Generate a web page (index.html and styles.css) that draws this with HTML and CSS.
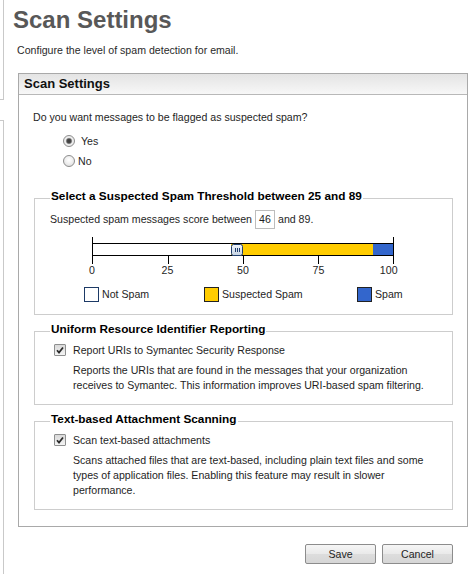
FILE: index.html
```html
<!DOCTYPE html>
<html lang="en">
<head>
<meta charset="utf-8">
<title>Scan Settings</title>
<link rel="stylesheet" href="styles.css">
</head>
<body>
<div class="page">
  <div class="rail">
    <div class="rail-top"></div>
    <div class="rail-bottom"></div>
  </div>
  <main class="main">
    <h1 class="title">Scan Settings</h1>
    <p class="subtitle">Configure the level of spam detection for email.</p>
    <section class="panel">
      <h2 class="panel-header">Scan Settings</h2>
      <div class="panel-body">
        <p class="question">Do you want messages to be flagged as suspected spam?</p>
        <div class="radio-group">
          <label class="radio-row"><span class="radio checked"></span><span>&nbsp;Yes</span></label>
          <label class="radio-row"><span class="radio"></span><span>No</span></label>
        </div>

        <fieldset class="group">
          <legend>Select a Suspected Spam Threshold between 25 and 89</legend>
          <div class="score-row">
            <span>Suspected spam messages score between</span>
            <span class="score-box">46</span>
            <span>and 89.</span>
          </div>
          <div class="slider">
            <div class="scale">
              <div class="track">
                <span class="seg seg-safe" style="width:138px"></span>
                <span class="seg seg-suspect" style="width:142px"></span>
                <span class="seg seg-spam" style="width:20px"></span>
                <span class="handle" style="left:138px">
                  <svg width="12" height="12" viewBox="0 0 12 12">
                    <defs>
                      <linearGradient id="hg" x1="0" y1="0" x2="0" y2="1">
                        <stop offset="0" stop-color="#f1f5fa"/>
                        <stop offset="1" stop-color="#c4d2e2"/>
                      </linearGradient>
                    </defs>
                    <rect x="0.5" y="0.5" width="11" height="11" rx="2" fill="url(#hg)" stroke="#1f3d6d"/>
                    <rect x="4" y="4" width="1" height="4" fill="#1f3d6d"/>
                    <rect x="6" y="4" width="1" height="4" fill="#1f3d6d"/>
                    <rect x="8" y="4" width="1" height="4" fill="#1f3d6d"/>
                  </svg>
                </span>
              </div>
              <span class="tick" style="left:25%"></span>
              <span class="tick" style="left:50%"></span>
              <span class="tick" style="left:75%"></span>
            </div>
            <div class="scale-labels">
              <span class="scale-label" style="left:0%">0</span>
              <span class="scale-label" style="left:25%">25</span>
              <span class="scale-label" style="left:50%">50</span>
              <span class="scale-label" style="left:75%">75</span>
              <span class="scale-label end" style="left:100%">100</span>
            </div>
          </div>
          <div class="key">
            <div class="key-item"><span class="swatch swatch-safe"></span><span>Not Spam</span></div>
            <div class="key-item"><span class="swatch swatch-suspect"></span><span>Suspected Spam</span></div>
            <div class="key-item"><span class="swatch swatch-spam"></span><span>Spam</span></div>
          </div>
        </fieldset>

        <fieldset class="group">
          <legend>Uniform Resource Identifier Reporting</legend>
          <label class="check-row">
            <span class="checkbox"><svg width="10" height="10" viewBox="0 0 10 10"><path d="M2 5.2 L4 7.6 L8 2.4" fill="none" stroke="#2a2a2a" stroke-width="1.7"/></svg></span>
            <span>Report URIs to Symantec Security Response</span>
          </label>
          <p class="desc">Reports the URIs that are found in the messages that your organization receives to Symantec. This information improves URI-based spam filtering.</p>
        </fieldset>

        <fieldset class="group">
          <legend>Text-based Attachment Scanning</legend>
          <label class="check-row">
            <span class="checkbox"><svg width="10" height="10" viewBox="0 0 10 10"><path d="M2 5.2 L4 7.6 L8 2.4" fill="none" stroke="#2a2a2a" stroke-width="1.7"/></svg></span>
            <span>Scan text-based attachments</span>
          </label>
          <p class="desc">Scans attached files that are text-based, including plain text files and some types of application files. Enabling this feature may result in slower performance.</p>
        </fieldset>
      </div>
    </section>
    <div class="actions">
      <button class="btn" type="button">Save</button>
      <button class="btn" type="button">Cancel</button>
    </div>
  </main>
</div>
</body>
</html>
```

FILE: styles.css
```css
* { box-sizing: border-box; }
html, body { margin: 0; padding: 0; }
body {
  font-family: "Liberation Sans", Arial, sans-serif;
  font-size: 10.6px;
  line-height: 13px;
  color: #1e1e1e;
  background: #fff;
}
.page { display: flex; min-height: 574px; }

.rail { flex: none; width: 4px; display: flex; flex-direction: column; }
.rail-top { height: 100px; border-right: 1px solid #c9c9c9; border-bottom: 1px solid #c9c9c9; }
.rail-bottom { flex: 1; margin-top: 20px; border-top: 1px solid #c9c9c9; border-right: 1px solid #c9c9c9; }

.main { flex: 1; min-width: 0; padding: 6px 6px 0 14px; }

.title {
  margin: 0 0 0 -5px;
  font-size: 24px;
  line-height: 28px;
  font-weight: bold;
  color: #585858;
}
.subtitle { margin: 10px 0 0 -1px; color: #2a2a2a; }

.panel { margin-top: 16px; border: 1px solid #a9a9a9; }
.panel-header {
  margin: 0;
  height: 21px;
  padding-left: 5px;
  border-bottom: 1px solid #b8b8b8;
  background: linear-gradient(#e4e4e4, #f7f7f7);
  font-size: 13px;
  line-height: 20px;
  font-weight: bold;
  color: #111;
}
.panel-body { padding: 16px 14px 16px 14px; }
.question { margin: 0; }

.radio-group { margin-top: 7px; padding-left: 30px; }
.radio-row { display: flex; align-items: center; gap: 3px; height: 20px; }
.radio {
  width: 12px;
  height: 12px;
  border-radius: 50%;
  border: 1px solid #8d8d8d;
  background: radial-gradient(circle at 50% 40%, #ffffff 0, #f0f0f0 45%, #d6d6d6 100%);
}
.radio.checked {
  background: radial-gradient(circle at 50% 50%, #3c3c3c 0, #4a4a4a 2px, #9a9a9a 2.8px, #efefef 3.6px, #e2e2e2 100%);
}

.group {
  margin: 19px 0 0 1px;
  padding: 2px 15px 12px;
  border: 1px solid #cdcdcd;
  min-width: 0;
}
.group + .group { margin-top: 8px; padding-bottom: 11px; }
.group legend {
  padding: 0 1px 4px;
  font-size: 11.8px;
  line-height: 13px;
  font-weight: bold;
  color: #000;
}

.score-row { display: flex; align-items: center; gap: 3px; height: 20px; }
.score-box {
  width: 20px;
  height: 19px;
  border: 1px solid #bdbdbd;
  display: flex;
  align-items: center;
  justify-content: center;
}

.slider { width: 302px; margin: 8px 0 0 42px; }
.scale {
  position: relative;
  padding: 6px 0 8px;
  border-left: 1px solid #000;
  border-right: 1px solid #000;
}
.track {
  position: relative;
  display: flex;
  height: 13px;
  border-top: 1px solid #000;
  border-bottom: 1px solid #000;
}
.seg { display: block; height: 100%; flex: none; }
.seg-safe { background: #fff; }
.seg-suspect { background: #ffcc00; }
.seg-spam { background: #3366cc; }
.handle { position: absolute; top: 0; width: 12px; height: 12px; display: block; }
.handle svg { display: block; }
.tick { position: absolute; bottom: 0; width: 1px; height: 8px; background: #000; }
.scale-labels { position: relative; height: 13px; }
.scale-label { position: absolute; top: 0; transform: translateX(-50%); }
.scale-label.end { transform: translateX(-80%); }

.key {
  display: grid;
  grid-template-columns: 120px 153px auto;
  height: 15px;
  margin: 10px 0 0 34px;
}
.key-item { display: flex; align-items: center; gap: 3px; }
.swatch { flex: none; width: 15px; height: 15px; border: 1px solid #222; }
.swatch-safe { background: #fff; border-color: #1d3a66; }
.swatch-suspect { background: #ffcc00; }
.swatch-spam { background: #3366cc; }

.check-row { display: flex; align-items: center; gap: 7px; height: 14px; margin: 1px 0 0 4px; }
.checkbox {
  flex: none;
  width: 12px;
  height: 12px;
  border: 1px solid #8e8f8f;
  border-radius: 1px;
  background: linear-gradient(#d9d9d9, #f4f4f4);
  display: flex;
}
.checkbox svg { display: block; }
.desc { margin: 6px 0 0 23px; line-height: 15px; }

.actions {
  display: flex;
  justify-content: flex-end;
  gap: 6px;
  margin-top: 17px;
  padding-right: 15px;
}
.btn {
  width: 71px;
  height: 20px;
  padding: 0;
  border: 1px solid #8c8c8c;
  border-radius: 2px;
  background: linear-gradient(#f6f6f6, #e9e9e9 50%, #dddddd 51%, #d6d6d6);
  font-family: inherit;
  font-size: 10.6px;
  line-height: 13px;
  color: #1e1e1e;
}
```
